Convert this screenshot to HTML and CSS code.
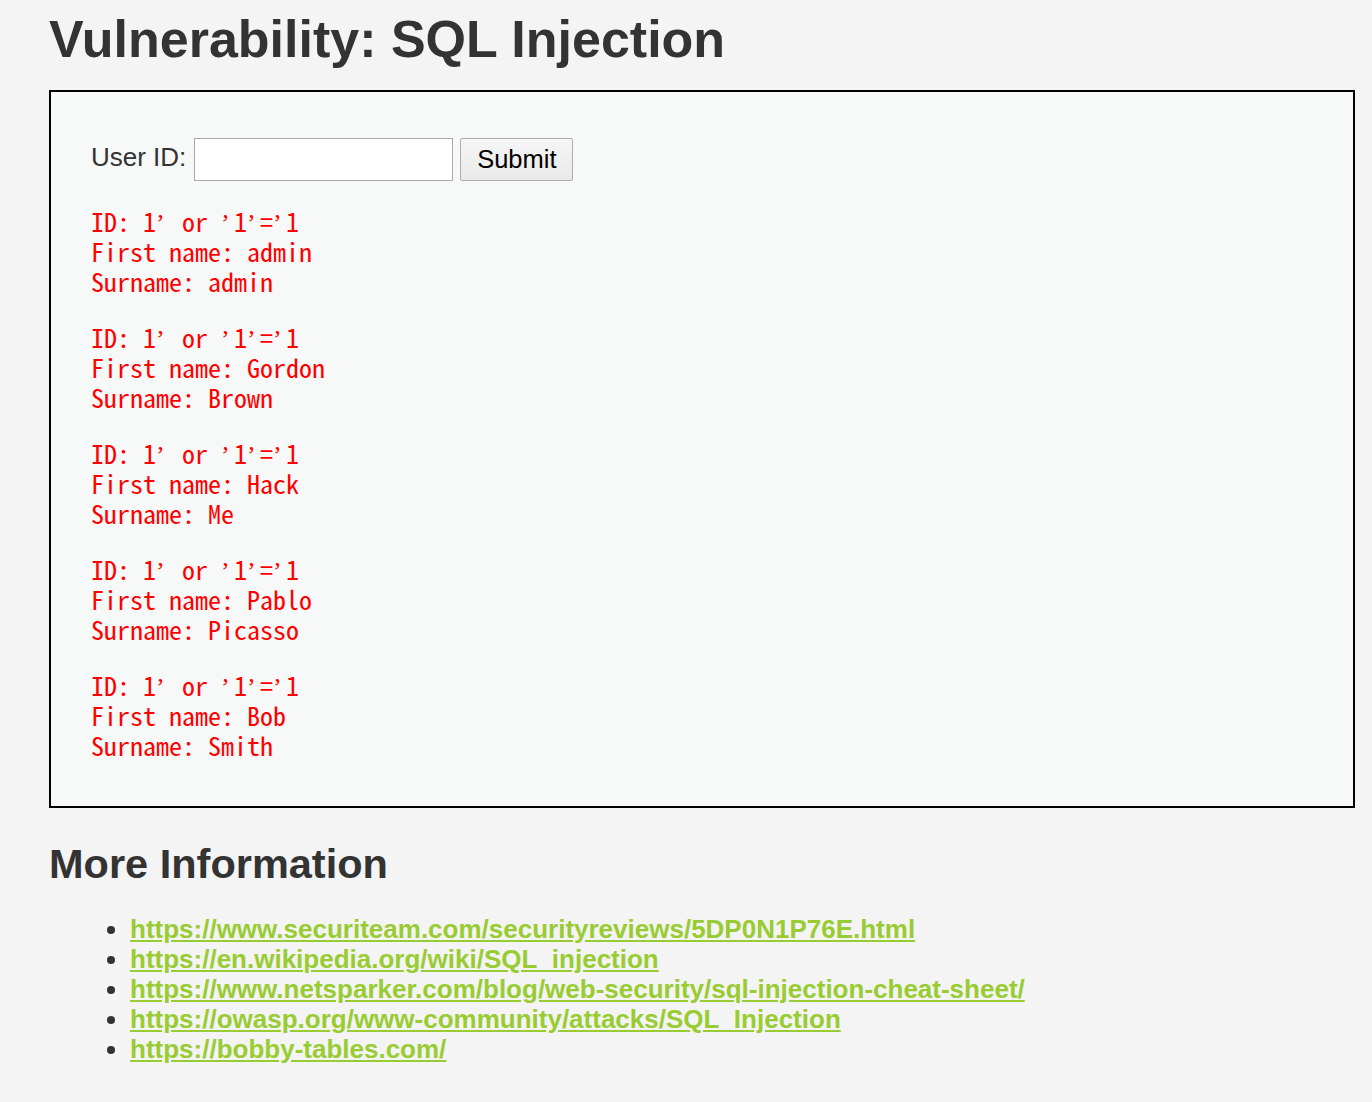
FILE: index.html
```html
<!DOCTYPE html>
<html lang="en">
<head>
<meta charset="utf-8">
<title>Vulnerability: SQL Injection</title>
<link rel="stylesheet" href="styles.css">
</head>
<body>
<div class="main">
  <h1 class="title">Vulnerability: SQL Injection</h1>
  <div class="vuln-area">
    <form class="id-form">
      <label class="id-label" for="uid">User ID:</label>
      <input class="id-input" id="uid" type="text" name="id">
      <button class="submit-btn" type="button">Submit</button>
    </form>
    <pre class="result">ID: 1<span class="q">’</span> or <span class="q">’</span>1<span class="q">’</span>=<span class="q">’</span>1
First name: admin
Surname: admin</pre>
    <pre class="result">ID: 1<span class="q">’</span> or <span class="q">’</span>1<span class="q">’</span>=<span class="q">’</span>1
First name: Gordon
Surname: Brown</pre>
    <pre class="result">ID: 1<span class="q">’</span> or <span class="q">’</span>1<span class="q">’</span>=<span class="q">’</span>1
First name: Hack
Surname: Me</pre>
    <pre class="result">ID: 1<span class="q">’</span> or <span class="q">’</span>1<span class="q">’</span>=<span class="q">’</span>1
First name: Pablo
Surname: Picasso</pre>
    <pre class="result">ID: 1<span class="q">’</span> or <span class="q">’</span>1<span class="q">’</span>=<span class="q">’</span>1
First name: Bob
Surname: Smith</pre>
  </div>
  <h2 class="subtitle">More Information</h2>
  <ul class="links">
    <li><a href="#">https://www.securiteam.com/securityreviews/5DP0N1P76E.html</a></li>
    <li><a href="#">https://en.wikipedia.org/wiki/SQL_injection</a></li>
    <li><a href="#">https://www.netsparker.com/blog/web-security/sql-injection-cheat-sheet/</a></li>
    <li><a href="#">https://owasp.org/www-community/attacks/SQL_Injection</a></li>
    <li><a href="#">https://bobby-tables.com/</a></li>
  </ul>
</div>
</body>
</html>
```
FILE: styles.css
```css
html, body {
  margin: 0;
  padding: 0;
}
body {
  background: #f4f4f4;
  color: #333333;
  font-family: "Liberation Sans", Arial, sans-serif;
}
.main {
  padding: 9px 17px 40px 49px;
}
.title {
  margin: 0;
  font-size: 52px;
  line-height: 60px;
  font-weight: bold;
  color: #333333;
}
.vuln-area {
  margin-top: 21px;
  border: 2px solid #000000;
  background: #f7f8f8;
  padding: 46px 40px 46px 40px;
}
.id-form {
  display: flex;
  align-items: flex-start;
  margin: 0;
}
.id-label {
  font-size: 26px;
  line-height: 30px;
  margin-top: 4px;
  margin-right: 8px;
  color: #333333;
}
.id-input {
  box-sizing: border-box;
  width: 259px;
  height: 43px;
  margin: 0 7px 0 0;
  border: 1px solid #a9a9a9;
  background: #ffffff;
  padding: 2px 6px;
  font-size: 26px;
  font-family: "Liberation Sans", Arial, sans-serif;
}
.submit-btn {
  box-sizing: border-box;
  width: 113px;
  height: 43px;
  margin: 0;
  border: 1px solid #adadad;
  border-radius: 2px;
  background: linear-gradient(#f6f6f6, #e9e9e9);
  color: #000000;
  font-family: "Liberation Sans", Arial, sans-serif;
  font-size: 25.5px;
  padding: 0;
}
.result {
  margin: 25px 0 0 0;
  color: #ff0000;
  font-family: "Noto Sans Mono CJK SC", "Liberation Mono", monospace;
  font-size: 26px;
  line-height: 30px;
  font-weight: normal;
}
.result + .result {
  margin-top: 26px;
}
.result .q {
  display: inline-block;
  width: 13px;
  font-family: "Liberation Serif", serif;
  font-size: 26px;
  line-height: 20px;
  text-align: left;
}
.subtitle {
  margin: 32px 0 0 0;
  font-size: 41.5px;
  line-height: 48px;
  font-weight: bold;
  color: #333333;
}
.links {
  margin: 26px 0 0 0;
  padding-left: 81px;
  font-size: 26px;
  line-height: 30px;
  font-weight: bold;
}
.links li {
  color: #333333;
}
.links a {
  color: #99cc33;
  text-decoration: underline;
}
```
